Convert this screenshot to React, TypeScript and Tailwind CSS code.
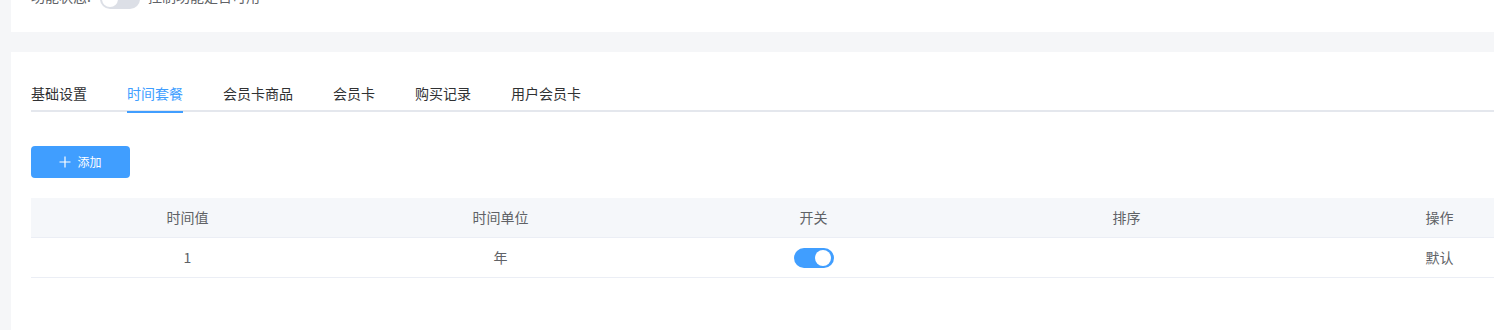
const tabs = ['基础设置', '时间套餐', '会员卡商品', '会员卡', '购买记录', '用户会员卡']

const columns = ['时间值', '时间单位', '开关', '排序', '操作']

function Toggle({ on }: { on: boolean }) {
  return (
    <span
      className={
        on
          ? 'relative inline-flex h-[20px] w-[40px] shrink-0 items-center rounded-full bg-[#409eff]'
          : 'relative inline-flex h-[20px] w-[40px] shrink-0 items-center rounded-full bg-[#dcdfe6]'
      }
    >
      <span
        className={
          on
            ? 'ml-[21px] h-[16px] w-[16px] rounded-full bg-white'
            : 'ml-[2px] h-[16px] w-[16px] rounded-full bg-white'
        }
      />
    </span>
  )
}

export default function App() {
  return (
    <div
      className="h-[330px] w-[1494px] overflow-hidden bg-[#f5f6f8] pl-[11px] text-[14px] text-[#606266]"
      style={{ fontFamily: '"Noto Sans CJK SC", "Noto Sans", sans-serif' }}
    >
      <div className="h-[32px] w-[1600px] overflow-hidden bg-white">
        <div className="-mt-[11px] flex h-[20px] items-center pl-[20px]">
          <span className="mb-[6px] w-[69px] text-[#606266]">功能状态:</span>
          <Toggle on={false} />
          <span className="mb-[6px] ml-[8px] text-[#606266]">控制功能是否可用</span>
        </div>
      </div>

      <div className="mt-[20px] h-[400px] w-[1600px] bg-white px-[20px] pt-[20px]">
        <div className="flex h-[40px] border-b-2 border-[#e4e7ed]">
          {tabs.map((t, i) => (
            <div
              key={t}
              className={
                (i === 0 ? 'pr-[20px] ' : 'px-[20px] ') + 'flex h-[40px] items-center'
              }
            >
              <span
                className={
                  i === 1
                    ? '-mb-[2px] flex h-[40px] items-center border-b-2 border-[#409eff] pt-[2px] text-[#409eff]'
                    : 'flex h-[40px] items-center pt-[2px] text-[#303133]'
                }
              >
                {t}
              </span>
            </div>
          ))}
        </div>

        <button
          type="button"
          className="mt-[34px] flex h-[32px] w-[99px] items-center justify-center gap-[6px] rounded-[4px] bg-[#409eff] text-[12px] text-white"
        >
          <svg width="12" height="12" viewBox="0 0 12 12" fill="none" stroke="white" strokeWidth="1.2">
            <path d="M6 0.5v11M0.5 6h11" />
          </svg>
          <span>添加</span>
        </button>

        <div className="mt-[20px] w-[1565px]">
          <div className="grid h-[40px] grid-cols-5 border-b border-[#ebeef5] bg-[#f5f7fa]">
            {columns.map((c) => (
              <div key={c} className="flex items-center justify-center text-[#606266]">
                {c}
              </div>
            ))}
          </div>
          <div className="grid h-[40px] grid-cols-5 border-b border-[#ebeef5]">
            <div className="flex items-center justify-center">1</div>
            <div className="flex items-center justify-center">年</div>
            <div className="flex items-center justify-center">
              <Toggle on />
            </div>
            <div className="flex items-center justify-center" />
            <div className="flex items-center justify-center">默认</div>
          </div>
        </div>
      </div>
    </div>
  )
}
